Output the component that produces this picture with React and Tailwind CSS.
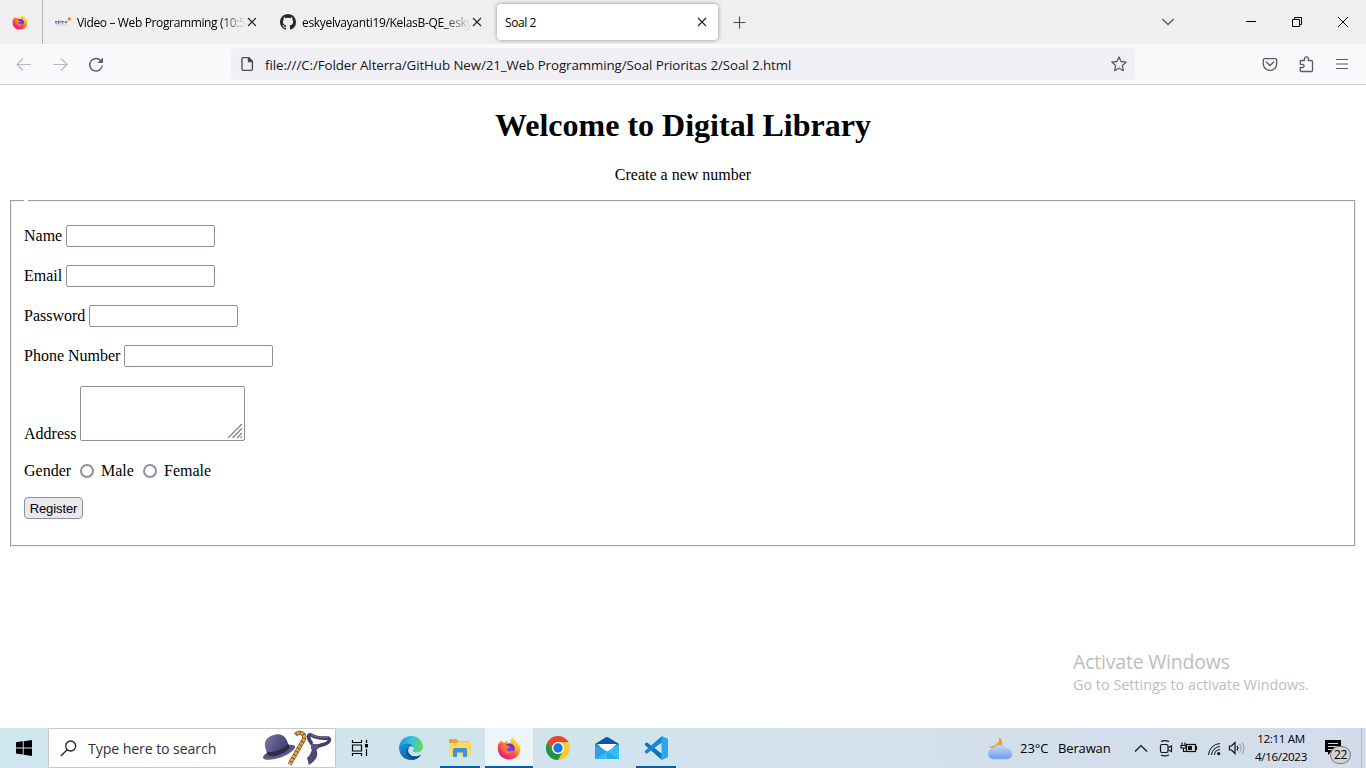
import React from "react";

const Firefox = ({ size, id }) => (
  <svg width={size} height={size} viewBox="0 0 24 24">
    <defs>
      <linearGradient id={id} x1="0.85" y1="0.1" x2="0.25" y2="0.95">
        <stop offset="0" stopColor="#fff44f" />
        <stop offset="0.3" stopColor="#ffb62c" />
        <stop offset="0.6" stopColor="#ff5a36" />
        <stop offset="1" stopColor="#e31587" />
      </linearGradient>
    </defs>
    <path
      fill={`url(#${id})`}
      d="M15.8.6c.2 1.8 1 2.7 2.1 3.7l.8-.1c1 1.3 1.2 2 1.4 2.9l.8-.6c1.7 2.6 2.5 5.1 2.3 7.4C22.700 19.400 18 23.400 12 23.400S1 18.900.8 13C.7 10.200 1.200 8 2.300 6.200c0 0 0 1 .2 1.300C2.900 6 3.900 4.800 4.700 4.200c-.1.8 0 1.500.3 2 1.200-.3 2.200 0 3 .4C8.800 5.400 9.900 4.800 11 4.500c-.5.700-.8 1.500-.6 2.100.6.600 1.600.6 2.700.800C13.200 4.500 14 2.200 15.800.6z"
    />
    <circle cx="12.300" cy="12.800" r="5.300" fill="#7b3fe0" />
    <path fill="#ff7a2f" d="M4.500 9.500c2.500-1.200 4.500-.5 6 .6 1 .1 2.300 0 3 .4-.6 1.500-2.400 1.300-3.200 2.300-.8 1 .1 2.500 2.300 2.600 1.600 0 2.600-1 4-.4-1 2.600-4 3.600-6.300 2.900C6.400 16.800 5 13.500 4.500 9.500z" opacity=".9" />
    <path fill="#5b3bd1" d="M10.500 8.500c2.500-1.500 6-.3 6.800 2.500.5 2-.2 3.500-1.200 4.300.3-2-.6-4-2.300-4.800-1-.5-2.300-.8-3.300-2z" />
  </svg>
);

const TabClose = () => (
  <svg width="10" height="10" viewBox="0 0 10 10" className="shrink-0" stroke="#222" strokeWidth="1.1">
    <path d="M1 1l8 8M9 1l-8 8" />
  </svg>
);

const uiFont = "font-['Open_Sans','Noto_Sans',sans-serif]";

function TabBar() {
  return (
    <div className={`flex h-11 bg-[#efefef] text-[12px] text-black ${uiFont}`}>
      <div className="flex w-[43px] items-center border-r border-[#b1b1b3] pl-3">
        <Firefox size={16} id="ffTab" />
      </div>
      <div className="flex w-[227px] items-center pl-3">
        <svg width="16" height="16" viewBox="0 0 16 16" className="shrink-0">
          <path d="M0 7.500h2.500M0 9h2.500M3.500 6.500v3M5 6.500v3M6 7.500h3M6.500 9h2M9.500 8h3M11 7v2.500" stroke="#5a6c99" strokeWidth="1" />
          <path d="M1 11h11" stroke="#9eabc4" strokeWidth=".7" strokeDasharray="1.500 1" />
          <circle cx="14.300" cy="5" r="1.700" fill="#f57e20" />
        </svg>
        <div className="mt-0.5 ml-1.5 w-[170px] whitespace-nowrap tracking-[-0.36px] [mask-image:linear-gradient(to_right,#000_144px,transparent_169px)]">
          Video – Web Programming (10:5
        </div>
        <TabClose />
      </div>
      <div className="flex w-[227px] items-center pl-2.5">
        <svg width="16" height="16" viewBox="0 0 16 16" className="shrink-0" fill="#24292f">
          <path d="M8 0C3.580 0 0 3.580 0 8c0 3.540 2.290 6.530 5.470 7.590.4.070.55-.17.55-.38 0-.19-.01-.82-.01-1.490-2.010.37-2.530-.49-2.690-.94-.09-.23-.48-.94-.82-1.130-.28-.15-.68-.52-.01-.53.63-.01 1.080.58 1.230.82.72 1.210 1.870.87 2.330.66.07-.52.28-.87.51-1.070-1.780-.2-3.640-.89-3.640-3.950 0-.87.31-1.590.82-2.150-.08-.2-.36-1.020.08-2.120 0 0 .67-.21 2.200.82a7.600 7.600 0 0 1 4 0c1.530-1.040 2.200-.82 2.200-.82.44 1.100.16 1.920.08 2.120.51.56.82 1.270.82 2.150 0 3.070-1.870 3.750-3.650 3.950.29.25.54.73.54 1.480 0 1.070-.01 1.930-.01 2.200 0 .21.15.46.55.38A8.010 8.010 0 0 0 16 8c0-4.420-3.580-8-8-8z" />
        </svg>
        <div className="mt-0.5 ml-1.5 w-[170px] whitespace-nowrap tracking-[-0.32px] [mask-image:linear-gradient(to_right,#000_140px,transparent_170px)]">
          eskyelvayanti19/KelasB-QE_esky
        </div>
        <TabClose />
      </div>
      <div className="mt-1 flex h-9 w-[221px] items-center justify-between rounded bg-white pr-[11px] pl-2 shadow-[0_0_4px_rgba(0,0,0,0.4)]">
        <span className="mt-0.5 tracking-[-0.4px]">Soal 2</span>
        <TabClose />
      </div>
      <div className="flex flex-1 items-center pl-[15px]">
        <svg width="13" height="13" viewBox="0 0 13 13" stroke="#4a4a55" strokeWidth="1.100">
          <path d="M6.500 .5v12M.5 6.500h12" />
        </svg>
      </div>
      <div className="flex w-[46px] items-center pl-px">
        <svg width="14" height="8" viewBox="0 0 14 8" fill="none" stroke="#5b5b66" strokeWidth="1.300">
          <path d="M1.300 1l5.700 5.500L12.700 1" />
        </svg>
      </div>
      <div className="flex w-[160px] items-center">
        <svg width="160" height="44" viewBox="0 0 160 44" fill="none" stroke="#000" strokeWidth="1">
          <path d="M40 21.500h10" />
          <path d="M86.500 19.500h7v7h-7zM88.500 19.500v-2h7v7h-2" />
          <path d="M132 17l10 10M142 17l-10 10" strokeWidth="1" />
        </svg>
      </div>
    </div>
  );
}

function Toolbar() {
  return (
    <div className="flex h-[41px] items-center border-b border-[#cccccc] bg-[#f9f9fb]">
      <svg width="231" height="40" viewBox="0 0 231 40" fill="none" strokeWidth="1.200">
        <g stroke="#b8b8be">
          <path d="M31 20.500H17.500M23 14.500l-6 6 6 6" />
          <path d="M53 20.500h13.500M61 14.500l6 6-6 6" />
        </g>
        <path d="M100.700 16.500A6.300 6.300 0 1 0 102.300 21.500" stroke="#5b5b66" strokeWidth="1.400" />
        <path d="M103 13.500v5.500h-5.500z" fill="#5b5b66" />
      </svg>
      <div className="flex h-8 w-[904px] items-center rounded bg-[#f0f0f4] pl-2.5">
        <svg width="13" height="14" viewBox="0 0 13 14" fill="none" stroke="#4a4a55" strokeWidth="1.300">
          <path d="M2 .7h5.800L11.400 4.300V12.300a1 1 0 0 1-1 1H2a1 1 0 0 1-1-1V1.700a1 1 0 0 1 1-1z" />
          <path d="M7.500 1v3.700h3.700z" fill="#4a4a55" />
        </svg>
        <div className={`mt-[3px] ml-[11px] flex-1 text-[13.3px] tracking-[-0.068px] whitespace-nowrap text-[#15141a] ${uiFont}`}>
          file:///C:/Folder Alterra/GitHub New/21_Web Programming/Soal Prioritas 2/Soal 2.html
        </div>
        <svg width="16" height="16" viewBox="0 0 16 16" className="mr-2" fill="none" stroke="#5b5b66" strokeWidth="1.300" strokeLinejoin="round">
          <path d="M8 .9l2.100 4.600 5.100.6-3.800 3.400 1 5.200L8 12.200l-4.400 2.500 1-5.200L.8 6.100l5.100-.6z" />
        </svg>
      </div>
      <svg width="231" height="40" viewBox="0 0 231 40" fill="none" stroke="#5b5b66" strokeWidth="1.300">
        <path d="M129.500 14.700h11a1.200 1.200 0 0 1 1.200 1.200v3.800a6.700 6.700 0 0 1-13.400 0v-3.800a1.200 1.200 0 0 1 1.200-1.200zM131.300 18l3.700 3.500 3.700-3.500" strokeLinecap="round" />
        <path strokeLinejoin="round" d="M165.500 16.500h4v-1.700a1.900 1.900 0 0 1 3.800 0v1.700h3.200a1 1 0 0 1 1 1v9a1 1 0 0 1-1 1h-10.300a1 1 0 0 1-1-1v-3h2.300a1.500 1.500 0 0 0 0-3.200h-2.200v-2.800a1 1 0 0 1 .2-1z" />
        <path d="M201 15.500h12M201 20h12M201 24.500h12" strokeWidth="1.200" />
      </svg>
    </div>
  );
}

const fields = [
  { label: "Name", type: "text" },
  { label: "Email", type: "text" },
  { label: "Password", type: "password" },
  { label: "Phone Number", type: "text" },
];

const Radio = () => <input type="radio" name="gender" className="h-3.5 w-3.5 appearance-none rounded-full border-2 border-[#8f8f9d] bg-white" />;

function Page() {
  return (
    <main className="relative h-[643px] bg-white px-2.5 pt-px font-['Liberation_Serif',serif] text-base leading-[18px] text-black">
      <h1 className="mt-[21px] text-center text-[32px] leading-9 font-bold">Welcome to Digital Library</h1>
      <p className="mt-[23px] text-center">Create a new number</p>
      <div className="relative mt-4 h-[347px] border border-t-[#a0a0a0] border-r-[#f0f0f0] border-b-[#f0f0f0] border-l-[#a0a0a0]">
        <div className="absolute -top-px left-[13px] h-0.5 w-1 bg-white" />
        <div className="h-full border border-t-[#f0f0f0] border-r-[#a0a0a0] border-b-[#a0a0a0] border-l-[#f0f0f0] pt-[23px] pl-3">
          <div className="flex flex-col gap-[18px]">
            {fields.map((f) => (
              <label key={f.label} className="flex h-[22px] items-center gap-1">
                {f.label}
                <input type={f.type} className="h-[22px] w-[149px] rounded-[2px] border border-[#8f8f9d] bg-white" />
              </label>
            ))}
          </div>
          <label className="mt-[19px] flex h-[55px] items-end gap-1">
            <span className="-mb-0.5">Address</span>
            <span className="relative block h-[55px] w-[165px]">
              <textarea className="block h-full w-full resize-none rounded-[2px] border border-[#8f8f9d] bg-white" />
              <svg className="absolute right-[3px] bottom-[3px]" width="14" height="14" viewBox="0 0 14 14" stroke="#777" strokeWidth="1.200">
                <path d="M0 14L14 0M4.500 14l9.500-9.500M9 14l5-5M12.500 14l1.500-1.500" />
              </svg>
            </span>
          </label>
          <div className="mt-[21px] flex h-[18px] items-center">
            <span className="w-14">Gender</span>
            <label className="flex w-[63px] items-center gap-[7px]"><Radio />Male</label>
            <label className="flex items-center gap-[7px]"><Radio />Female</label>
          </div>
          <button className="mt-[17px] flex h-[22px] w-[59px] items-center justify-center rounded-[4px] border border-[#8f8f9d] bg-[#e9e9ed] pt-0.5 font-['Liberation_Sans',sans-serif] text-[13px] tracking-[-0.1px]">
            Register
          </button>
        </div>
      </div>
      <div className={`absolute top-[563px] left-[1073px] whitespace-nowrap text-[#bdbdbd] ${uiFont}`}>
        <div className="text-[19.5px] leading-[27px] tracking-[-0.2px]">Activate Windows</div>
        <div className="text-[14.4px] leading-[19px] tracking-[0px]">Go to Settings to activate Windows.</div>
      </div>
    </main>
  );
}

const SearchArt = () => (
  <svg width="72" height="38" viewBox="0 0 72 38">
    <defs>
      <linearGradient id="hat" x1="0" y1="0" x2="1" y2="1">
        <stop offset="0" stopColor="#7c78ad" />
        <stop offset="1" stopColor="#36345f" />
      </linearGradient>
    </defs>
    <g transform="rotate(-20 18 20)">
      <ellipse cx="17" cy="23" rx="17" ry="5" fill="#5a5788" />
      <path d="M6 22C4 8 9 5 17 5s13 4 11 17c-4 4-17 4-22 0z" fill="url(#hat)" />
      <path d="M5.500 18c5 4 17 4 23 0v4.500c-6 4-18 4-23 0z" fill="#2e2c4b" />
      <path d="M0 23c6 5 27 6 34 0-3 7-28 8-34 0z" fill="#6a6694" />
    </g>
    <path d="M28.500 35.500L42.500 11c3-6-4-10-8-5" fill="none" stroke="#6a421e" strokeWidth="4.200" />
    <path d="M28.500 35.500L42.500 11c3-6-4-10-8-5" fill="none" stroke="#e0a354" strokeWidth="3.200" strokeDasharray="3 .8" />
    <path d="M51 15C46 8 47 5 50 6c5 3 11 3.500 17 3 3 1 1 5-3 6l-10 3" fill="none" stroke="#403e6b" strokeWidth="3.600" strokeLinejoin="round" />
    <path d="M50 5.500c5 3 11 3.500 17 3" fill="none" stroke="#716da0" strokeWidth="1" />
    <path d="M50 15l6 0 2 4-4 3-4-2z" fill="#5a5788" />
    <path d="M51 20l4 0c3 6 1 11-7 16l-2-7c3-3 4-5 5-9z" fill="#4c4979" />
  </svg>
);

const icons = {
  edge: (
    <svg width="24" height="24" viewBox="0 0 24 24">
      <defs>
        <linearGradient id="eTop" x1="0" y1=".4" x2="1" y2=".5">
          <stop offset="0" stopColor="#2196d8" />
          <stop offset=".5" stopColor="#35c1d6" />
          <stop offset="1" stopColor="#66db55" />
        </linearGradient>
        <linearGradient id="eLow" x1="0" y1="0" x2=".8" y2="1">
          <stop offset="0" stopColor="#1d93df" />
          <stop offset="1" stopColor="#0c59a4" />
        </linearGradient>
      </defs>
      <path fill="url(#eTop)" d="M0 11.500C.5 5 5.500 0 12 0c7 0 12 5 12 10.500 0 4-3 6-6.200 6-2.600 0-4-1-4-1.800 0-.6 1-1 1-2.900 0-2.200-2.200-4.300-5.300-4.300C5 7.500 1.500 9 0 11.500z" />
      <path fill="url(#eLow)" d="M0 11.500C1.500 8.500 5 7.200 8.500 7.200c3.500 0 6.100 2.200 6.300 4.600-.6-1-1.800-1.800-3-1.600-3 .8-4 5-1.300 8 2.500 2.700 7.500 3.300 11.500.5-2 3.300-5.600 5.300-10 5.300C5 24 0 18.500 0 11.500z" />
      <path fill="#0b4f96" d="M8.200 12.500c-2 4.500 1 9.500 6 11.200 3.300-.7 6-2.300 7.800-5-5 3-10.500 1.500-12.300-1.800-.9-1.600-.8-3.500.3-5.200-.8 0-1.400.3-1.800.8z" />
    </svg>
  ),
  folder: (
    <svg width="22" height="20" viewBox="0 0 22 20">
      <path fill="#e8a51e" d="M0 2a1 1 0 0 1 1-1h6.500l2 2H20v5H0z" />
      <path fill="#ffd769" d="M0 5h8l1.500-1.500H21a1 1 0 0 1 1 1V17a1 1 0 0 1-1 1H1a1 1 0 0 1-1-1z" />
      <path fill="#3c94d8" d="M4 19v-7a2 2 0 0 1 2-2h10a2 2 0 0 1 2 2v7h-4v-4.500H8V19z" />
    </svg>
  ),
  firefox: <Firefox size={24} id="ffBar" />,
  chrome: (
    <svg width="24" height="24" viewBox="0 0 24 24">
      <circle cx="12" cy="12" r="12" fill="#fcc934" />
      <path fill="#ea4335" d="M1.600 6A12 12 0 0 1 22.400 6H12a6 6 0 0 0-5.200 9z" />
      <path fill="#1e9447" d="M1.600 6A12 12 0 0 0 12 24l5.200-9a6 6 0 0 1-10.400 0z" />
      <circle cx="12" cy="12" r="6" fill="#fff" />
      <circle cx="12" cy="12" r="4.700" fill="#2274e5" />
    </svg>
  ),
  mail: (
    <svg width="24" height="24" viewBox="0 0 24 24">
      <path fill="#0a58a6" d="M0 8L11 1.200a2 2 0 0 1 2 0L24 8v5H0z" />
      <path fill="#fff" d="M2 8h20l-10 9z" />
      <path fill="#2f9fe8" d="M0 8l24 15H1a1 1 0 0 1-1-1z" />
      <path fill="#32bdf0" d="M24 8v14.500a1 1 0 0 1-1 .5H0l12-7.500z" />
      <path fill="#178bd8" d="M12 15.500L24 23H12z" opacity=".35" />
    </svg>
  ),
  vscode: (
    <svg width="24" height="24" viewBox="0 0 24 24">
      <path fill="#0a74bd" d="M1 7.500l1.800-1.300 15 11.500V24L.8 9z" />
      <path fill="#1389d2" d="M.8 15L18 0v6.300l-15.200 11.500L1 16.500z" />
      <path fill="#2aa7f3" d="M17.500 0L24 2.800v18.400L17.500 24z" />
    </svg>
  ),
};

const apps = [
  { name: "edge", frame: "" },
  { name: "folder", frame: "", bar: "w-10" },
  { name: "firefox", frame: "bg-[#edf5f8]", bar: "w-12" },
  { name: "chrome", frame: "" },
  { name: "mail", frame: "" },
  { name: "vscode", frame: "", bar: "w-10" },
];

function Taskbar() {
  return (
    <footer className={`flex h-10 bg-linear-to-r from-[#cee6ed] via-[#d2e3ed] to-[#d3dcea] text-black ${uiFont}`}>
      <div className="flex w-12 items-center justify-center">
        <svg width="16" height="16" viewBox="0 0 16 16">
          <path d="M0 2.300l6.800-1v6.200H0zM7.700 1.200L16 0v7.500H7.700zM0 8.400h6.800v6.200l-6.800-1zM7.700 8.400H16V16l-8.300-1.200z" />
        </svg>
      </div>
      <div className="flex w-72 items-center border border-[#c8c8c8] bg-white pl-[11px]">
        <svg width="17" height="17" viewBox="0 0 17 17" fill="none" stroke="#222" strokeWidth="1.300">
          <circle cx="10.700" cy="6" r="5" />
          <path d="M7.200 9.700L.8 16" />
        </svg>
        <span className="ml-[11px] w-[173px] pt-0.5 text-[14.2px] tracking-[-0.12px] text-[#333]">Type here to search</span>
        <SearchArt />
      </div>
      <div className="flex w-[51px] items-center pl-[15px]">
        <svg width="18" height="16" viewBox="0 0 18 16" fill="none" stroke="#000" strokeWidth="1.200">
          <path d="M1.500 0v2.500h9V0M1.500 16v-2.500h9V16M1.500 5h9v6h-9zM15.500 0v3M15.500 9v7" />
          <path d="M14 4h3v3.500h-3z" fill="#000" stroke="none" />
        </svg>
      </div>
      <div className="flex gap-px">
        {apps.map((a) => (
          <div key={a.name} className={`flex w-12 flex-col items-center justify-between ${a.frame}`}>
            <div className="flex h-[38px] items-center pt-0.5">{icons[a.name]}</div>
            <div className={`h-0.5 bg-[#005fb0] ${a.bar || "w-0"}`} />
          </div>
        ))}
      </div>
      <div className="flex flex-1 items-center justify-end">
        <svg width="26" height="24" viewBox="0 0 26 24" className="mr-1.5">
          <defs>
            <linearGradient id="cloud" x1="0" y1="0" x2="0" y2="1">
              <stop offset="0" stopColor="#c9dcfb" />
              <stop offset="1" stopColor="#6f9de8" />
            </linearGradient>
          </defs>
          <path fill="#f5a31c" d="M11 1c4 3 4 7 2 9s-8 4-12 .5c4 0 6-1 8-3s2.500-4 2-6.500z" />
          <path fill="url(#cloud)" stroke="#8bb0ec" strokeWidth=".5" d="M5.500 23a5 5 0 0 1-.5-10C6.500 9.500 9.500 8.500 12.500 9s4.500 2 5.300 4C21 12.500 24 15 24 18s-2 5-5 5z" />
        </svg>
        <span className="w-[38px] pt-px text-[13px] tracking-[-0.05px] whitespace-nowrap">23°C</span>
        <span className="w-[75px] pt-px text-[13px] tracking-[-0.15px]">Berawan</span>
        <svg width="113" height="40" viewBox="0 0 113 40" fill="none" stroke="#111" strokeWidth="1.200">
          <path d="M2 23.500l6-6 6 6" />
          <rect x="27.500" y="16.500" width="7.500" height="8" rx="1.500" />
          <path d="M35.500 19.500l3-1.500v5.500l-3-1.500M28 13.500c2.500-1.300 5-1.300 8 0M28 27c2.500 1.300 5 1.300 8 0" />
          <rect x="53.500" y="16.500" width="9" height="7" />
          <path d="M55 18h4v4h-4z" fill="#111" stroke="none" />
          <path d="M63.500 18v4M48 17.500h5v2.500h-5zM49 17v-2.500M52 17v-2.500M50.500 20v3.500h3" />
          <path d="M75.500 27a12 12 0 0 1 11.500-11.500M78.500 27a9 9 0 0 1 8.500-8.500M81.500 27a6 6 0 0 1 5.500-5.500" strokeWidth="1" />
          <circle cx="85.700" cy="25.700" r="1.600" fill="#111" stroke="none" />
          <path d="M96.500 18h2l3.500-3.500v11L98.500 22h-2z" />
          <path d="M104 18c1 1.300 1 3 0 4.500" />
          <path d="M106.500 16c2 2.500 2 6 0 8.500M109 14.500c2.500 3.500 2.500 8 0 11.500" stroke="#8a92a0" strokeWidth="1" />
        </svg>
        <div className="mr-4 ml-[7px] flex w-[56px] flex-col items-center pb-px text-[11.6px] leading-[18px] tracking-[-0.33px] whitespace-nowrap">
          <span>12:11 AM</span>
          <span>4/16/2023</span>
        </div>
        <div className="relative h-10 w-9">
          <svg width="36" height="40" viewBox="0 0 36 40">
            <path d="M0 12h16v12H6l-3 3v-3H0z" />
            <path d="M3 15.500h10M3 18.500h10M3 21.500h6" stroke="#d3dcea" strokeWidth="1" />
          </svg>
          <span className="absolute top-[18px] left-[5px] flex h-[18px] w-[21px] items-center justify-center rounded-full border border-[#777] bg-[#d0d2d6] text-[12px] tracking-[-0.3px]">22</span>
        </div>
        <div className="h-10 w-[5px] border-l border-[#aeb7c5]" />
      </div>
    </footer>
  );
}

export default function App() {
  return (
    <div className="flex h-[768px] w-[1366px] flex-col overflow-hidden">
      <TabBar />
      <Toolbar />
      <Page />
      <Taskbar />
    </div>
  );
}
